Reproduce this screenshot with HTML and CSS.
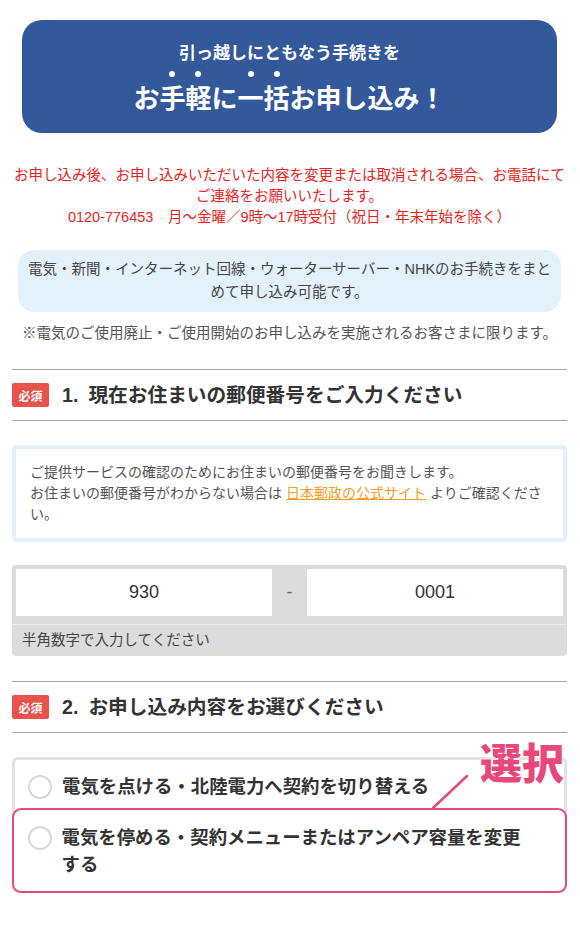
FILE: index.html
```html
<!DOCTYPE html>
<html lang="ja">
<head>
<meta charset="utf-8">
<title>お申し込み</title>
<link rel="stylesheet" href="styles.css">
</head>
<body>
<div class="page">
  <div class="banner">
    <p class="banner-sub">引っ越しにともなう手続きを</p>
    <p class="banner-main">お<span class="dot">手</span><span class="dot">軽</span>に<span class="dot">一</span><span class="dot">括</span>お申し込み！</p>
  </div>

  <p class="notice">お申し込み後、お申し込みいただいた内容を変更または取消される場合、お電話にてご連絡をお願いいたします。<br>0120-776453　月～金曜／9時～17時受付（祝日・年末年始を除く）</p>

  <div class="lead">電気・新聞・インターネット回線・ウォーターサーバー・NHKのお手続きをまとめて申し込み可能です。</div>

  <p class="note">※電気のご使用廃止・ご使用開始のお申し込みを実施されるお客さまに限ります。</p>

  <div class="q-head">
    <span class="badge">必須</span>
    <h2 class="q-title"><span class="q-num">1.</span>現在お住まいの郵便番号をご入力ください</h2>
  </div>

  <div class="info"><p>ご提供サービスの確認のためにお住まいの郵便番号をお聞きします。</p><p>お住まいの郵便番号がわからない場合は<a class="link" href="#">日本郵政の公式サイト</a>よりご確認ください。</p></div>

  <div class="zip">
    <div class="zip-row">
      <div class="zip-input">930</div>
      <span class="zip-dash">-</span>
      <div class="zip-input">0001</div>
    </div>
    <p class="zip-hint">半角数字で入力してください</p>
  </div>

  <div class="q-head q-head--second">
    <span class="badge">必須</span>
    <h2 class="q-title"><span class="q-num">2.</span>お申し込み内容をお選びください</h2>
  </div>

  <div class="choices">
    <div class="choice">
      <span class="radio"></span>
      <span class="choice-text">電気を点ける・北陸電力へ契約を切り替える</span>
    </div>
    <div class="choice choice--marked">
      <span class="radio"></span>
      <span class="choice-text">電気を停める・契約メニューまたはアンペア容量を変更する</span>
    </div>
    <svg class="callout-line" width="36" height="34" viewBox="0 0 36 34"><line x1="1" y1="33" x2="35" y2="1" stroke="#e8487b" stroke-width="2.5" stroke-linecap="round"/></svg>
    <span class="callout">選択</span>
  </div>
</div>
</body>
</html>
```

FILE: styles.css
```css
* {
  box-sizing: border-box;
  margin: 0;
  padding: 0;
}

body {
  margin: 0;
  background: #ffffff;
  font-family: "Liberation Sans", "Noto Sans CJK JP", sans-serif;
  color: #333333;
}

.page {
  width: 580px;
  padding: 20px 13px 40px 12px;
  display: flex;
  flex-direction: column;
}

/* Banner */
.banner {
  margin: 0 10px;
  height: 113px;
  padding-top: 20px;
  background: #33599b;
  border-radius: 20px;
  color: #ffffff;
  text-align: center;
  font-family: "Noto Sans CJK JP", sans-serif;
  font-weight: 700;
}

.banner-sub {
  font-size: 17px;
  line-height: 24px;
}

.banner-main {
  margin-top: 13px;
  font-size: 26px;
  line-height: 40px;
}

.dot {
  position: relative;
}

.dot::before {
  content: "";
  position: absolute;
  left: 50%;
  top: -7px;
  width: 6px;
  height: 6px;
  margin-left: -3px;
  border-radius: 50%;
  background: #ffffff;
}

/* Notice */
.notice {
  margin-top: 32px;
  font-size: 14.5px;
  line-height: 21px;
  color: #e8231d;
  text-align: center;
}

.lead {
  margin: 22px 6px 0;
  padding: 8px 8px;
  background: #e3f1fb;
  border-radius: 16px;
  font-size: 14.5px;
  line-height: 23px;
  color: #444444;
  text-align: center;
}

.note {
  margin-top: 11px;
  font-size: 14.5px;
  line-height: 21px;
  color: #555555;
  text-align: center;
}

/* Question heading */
.q-head {
  margin-top: 25px;
  padding: 13px 0;
  border-top: 1px solid #a6a6a6;
  border-bottom: 1px solid #a6a6a6;
  display: flex;
  align-items: center;
  gap: 13px;
}

.q-head--second {
  margin-top: 25px;
}

.badge {
  width: 37px;
  height: 24px;
  flex-shrink: 0;
  display: flex;
  align-items: center;
  justify-content: center;
  background: #e9514c;
  border-radius: 2px;
  color: #ffffff;
  font-size: 12px;
  font-weight: 700;
  font-family: "Noto Sans CJK JP", sans-serif;
}

.q-title {
  font-size: 19.7px;
  line-height: 24px;
  font-weight: 700;
  color: #333333;
}

.q-num {
  margin-right: 10px;
}

/* Info */
.info {
  margin-top: 24px;
  padding: 13px 14px;
  border: 4px solid #e4f1fb;
  border-radius: 4px;
  background: #ffffff;
  font-size: 14px;
  line-height: 21px;
  color: #555555;
}

.link {
  margin: 0 4px;
  color: #f2a024;
  text-decoration: underline;
}

/* Zip */
.zip {
  margin-top: 23px;
  background: #dcdcdc;
  border-radius: 4px;
}

.zip-row {
  padding: 4px 4px 0;
  display: grid;
  grid-template-columns: 1fr 35px 1fr;
  height: 51px;
}

.zip-input {
  background: #ffffff;
  display: flex;
  align-items: center;
  justify-content: center;
  font-size: 18px;
  color: #333333;
}

.zip-dash {
  display: flex;
  align-items: center;
  justify-content: center;
  font-size: 18px;
  color: #666666;
}

.zip-hint {
  margin-top: 8px;
  border-top: 1px solid #ececec;
  padding: 0 10px;
  font-size: 14.5px;
  line-height: 31px;
  color: #444444;
}

/* Choices */
.choices {
  position: relative;
  margin-top: 24px;
  border: 3px solid #e2e2e2;
  border-radius: 6px;
  background: #ffffff;
}

.choice {
  display: flex;
  align-items: flex-start;
  gap: 10px;
  padding: 15px 32px 9px 13px;
  font-size: 18.4px;
  line-height: 24px;
  font-weight: 700;
  color: #333333;
}

.choice--marked {
  margin: 0 -3px -3px;
  padding: 14px 32px 13px 13.5px;
  border: 2.5px solid #e8487b;
  border-radius: 9px;
  line-height: 27px;
  background: #ffffff;
}

.radio {
  width: 24px;
  height: 24px;
  flex-shrink: 0;
  border: 2px solid #d9d9d9;
  border-radius: 50%;
  background: #ffffff;
}

.choice--marked .radio {
  margin-top: 1.5px;
}

.callout-line {
  position: absolute;
  left: 417px;
  top: 15px;
  z-index: 2;
}

.callout {
  position: absolute;
  left: 465px;
  top: -20px;
  z-index: 3;
  font-family: "Noto Sans CJK JP", sans-serif;
  font-weight: 900;
  font-size: 42px;
  line-height: 42px;
  color: #e8487b;
  text-shadow: 0 0 2px #ffffff, 0 0 2px #ffffff;
}
```
